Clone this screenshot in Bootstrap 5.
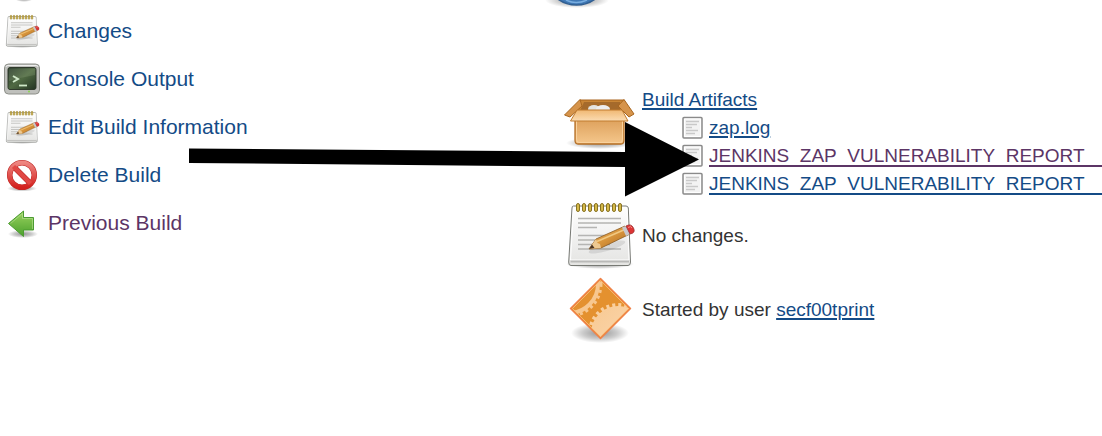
<!DOCTYPE html>
<html lang="en">
<head>
<meta charset="utf-8">
<meta name="viewport" content="width=device-width, initial-scale=1">
<title>Build</title>
<link href="https://cdn.jsdelivr.net/npm/bootstrap@5.3.0/dist/css/bootstrap.min.css" rel="stylesheet">
<script src="https://cdn.jsdelivr.net/npm/bootstrap@5.3.0/dist/js/bootstrap.bundle.min.js"></script>
<style>
body { font-family: "Liberation Sans", Arial, sans-serif; font-size: 19px; line-height: 28px; color: #333; background: #fff; }
a { color: #144b86; }
a.seen { color: #5c3566; }
.tasks { padding-left: 4px; }
.task-list { font-size: 21px; line-height: 32px; gap: 16px; }
.task-list a { gap: 8px; height: 32px; }
.summary { padding-left: 13px; }
.summary a { text-decoration-thickness: 2px; text-underline-offset: 2px; }
.status { height: 86px; }
.status svg { overflow: visible; }
.entry { gap: 6px; }
.event { height: 74px; }
.event span { padding-top: 2px; }
.files { padding-left: 40px; }
.files li { gap: 6px; height: 28px; }
.files .long-name { white-space: nowrap; line-height: 18px; margin-top: 2px; border-bottom: 2px solid; }
.pointer { left: 189px; top: 122px; pointer-events: none; }
</style>
</head>
<body>
<svg width="0" height="0" class="position-absolute" aria-hidden="true">
  <defs>
    <linearGradient id="paper" x2="0" y2="1"><stop stop-color="#fff"/><stop offset="1" stop-color="#e4e4e2"/></linearGradient>
    <linearGradient id="wood" x2="1" y2="1"><stop stop-color="#edb866"/><stop offset=".5" stop-color="#d8953c"/><stop offset="1" stop-color="#a9651e"/></linearGradient>
    <linearGradient id="carton" x2="0" y2="1"><stop stop-color="#dda05b"/><stop offset="1" stop-color="#f5c78c"/></linearGradient>
    <linearGradient id="flap" x2="0" y2="1"><stop stop-color="#f0b873"/><stop offset="1" stop-color="#fbdcb3"/></linearGradient>
    <linearGradient id="screen" x2="1" y2="1"><stop stop-color="#27382a"/><stop offset=".5" stop-color="#506a43"/><stop offset="1" stop-color="#223322"/></linearGradient>
    <linearGradient id="red" x2="0" y2="1"><stop stop-color="#ee8580"/><stop offset="1" stop-color="#d3211e"/></linearGradient>
    <linearGradient id="green" x2="0" y2="1"><stop stop-color="#9bd35f"/><stop offset="1" stop-color="#4aa02c"/></linearGradient>
    <linearGradient id="gear" x2="1" y2="1"><stop stop-color="#f8c992"/><stop offset="1" stop-color="#fbdcb9"/></linearGradient>
    <radialGradient id="shade"><stop stop-color="#000" stop-opacity=".42"/><stop offset=".6" stop-color="#000" stop-opacity=".2"/><stop offset="1" stop-color="#000" stop-opacity="0"/></radialGradient>
    <symbol id="notepad" viewBox="564 199 72 72">
      <ellipse cx="600" cy="264" rx="34" ry="5" fill="url(#shade)"/>
      <path d="M573.500 206H626Q628 206 628.300 208L630.500 262Q630.500 265.500 628 265.500H571Q568.500 265.500 568.700 262L572 208Q572 206 573.500 206Z" fill="url(#paper)" stroke="#777974"/>
      <path d="M573.500 209 570.500 260H629L627 209" fill="none" stroke="#fff"/>
      <path d="M570.500 261.500H629" stroke="#b9b9b7" stroke-width="2"/>
      <path d="M578 218.500H621M578 223H621M578 227.500H597M578 235.500H621M578 240H614M578 244.500H610M578 249H621" stroke="#b5b5b3" stroke-width="1.500"/>
      <g fill="#d5b94a" stroke="#887323"><rect x="576.500" y="203.500" width="3" height="8" rx="1.500"/><rect x="582.500" y="203.500" width="3" height="8" rx="1.500"/><rect x="588.500" y="203.500" width="3" height="8" rx="1.500"/><rect x="594.500" y="203.500" width="3" height="8" rx="1.500"/><rect x="600.500" y="203.500" width="3" height="8" rx="1.500"/><rect x="606.500" y="203.500" width="3" height="8" rx="1.500"/><rect x="612.500" y="203.500" width="3" height="8" rx="1.500"/><rect x="618.500" y="203.500" width="3" height="8" rx="1.500"/></g>
      <ellipse cx="607" cy="247" rx="19" ry="4" transform="rotate(-16 607 247)" fill="#000" opacity=".09"/>
      <path d="M589 249 596 239 625 226 630 234 601 248Z" fill="url(#wood)" stroke="#8a5a20" stroke-width=".8"/>
      <path d="M589 249 596 239 597.500 243 600 244 601 248Z" fill="#edc991"/><path d="M589 249 592 244.500 594.500 248Z" fill="#4b3625"/>
      <path d="M597 241.500 626 229" stroke="#f1c982" stroke-width="1.500"/>
      <path d="M622 227.500 626 226 630 234 626 236Z" fill="#c8c8cc"/><path d="M626 226Q631 223 633.500 228 636 233 630 234Z" fill="#dd3434" stroke="#9c3030" stroke-width=".8"/><path d="M628 227.500Q631 225.500 632 228" stroke="#fa8d88" fill="none"/>
    </symbol>
    <symbol id="document" viewBox="0 0 21 24">
      <rect x="1" y="1.500" width="19" height="20.500" rx="1" fill="#f3f3f3" stroke="#8a8a8a" stroke-width="1.500"/><path d="M2.500 3H18.500V20.500H2.500Z" fill="none" stroke="#fff"/>
      <path d="M4 5.500H17M4 8.500H15M4 11.500H10M4 14.500H16M4 17.500H13" stroke="#c9c9c9" stroke-width="1.300"/>
    </symbol>
  </defs>
</svg>

<div class="container-fluid p-0 position-relative overflow-hidden">
  <div class="row g-0">
    <nav class="col-6 tasks" aria-label="Build tasks">
      <svg class="d-block" width="36" height="15" viewBox="4 0 36 15" aria-hidden="true"><ellipse cx="24" cy="-1" rx="9" ry="3" fill="url(#shade)"/></svg>
      <div class="d-flex flex-column align-items-start task-list">
      <a href="#" class="d-inline-flex align-items-center text-decoration-none"><svg width="36" height="36" aria-hidden="true"><use href="#notepad"/></svg>Changes</a>
      <a href="#" class="d-inline-flex align-items-center text-decoration-none">
        <svg width="36" height="32" viewBox="4 63 36 32" aria-hidden="true">
          <rect x="4.500" y="64" width="35" height="30" rx="4" fill="#bfc0bc" stroke="#8d8f89"/><path d="M6 67Q6 65.500 8 65.500H36Q38 65.500 38 67" fill="none" stroke="#eee"/>
          <rect x="8" y="67.500" width="28" height="22" rx="2" fill="url(#screen)" stroke="#303a2c"/>
          <path d="M9 68.500H35V75Q23 77 9 81Z" fill="#dff0ca" opacity=".13"/>
          <path d="M13 76 18 79 13 82" fill="none" stroke="#cfe8c8" stroke-width="2"/><path d="M19 85.500H27" stroke="#cfe8c8" stroke-width="1.800"/><circle cx="29" cy="91.500" r="1" fill="#8bd54f"/>
        </svg>Console Output</a>
      <a href="#" class="d-inline-flex align-items-center text-decoration-none"><svg width="36" height="36" aria-hidden="true"><use href="#notepad"/></svg>Edit Build Information</a>
      <a href="#" class="d-inline-flex align-items-center text-decoration-none">
        <svg width="36" height="32" viewBox="4 159 36 32" aria-hidden="true">
          <ellipse cx="22" cy="188.500" rx="15" ry="3" fill="url(#shade)"/>
          <circle cx="22" cy="175" r="12.300" fill="#fff" stroke="#bd2725" stroke-width="5.500"/><path d="M13.500 166.500 30.500 183.500" stroke="#bd2725" stroke-width="5.500"/>
          <circle cx="22" cy="175" r="12.300" fill="none" stroke="url(#red)" stroke-width="4.500"/><path d="M13.500 166.500 30.500 183.500" stroke="#e14844" stroke-width="4.500"/>
        </svg>Delete Build</a>
      <a href="#" class="seen d-inline-flex align-items-center text-decoration-none">
        <svg width="36" height="32" viewBox="4 207 36 32" aria-hidden="true">
          <ellipse cx="23" cy="234" rx="15" ry="4" fill="url(#shade)"/>
          <path d="M8.500 223.500 23.500 211V217.500H33.500V230H23.500V236.500Z" fill="url(#green)" stroke="#4b9b31" stroke-linejoin="round"/><path d="M10.500 223.500 22.500 213.500V218.500H32.500V229" fill="none" stroke="#c5e8a3" opacity=".5"/>
        </svg>Previous Build</a>
      </div>
    </nav>

    <main class="col-6 summary">
      <div class="status">
        <svg class="d-block" width="72" height="10" viewBox="564 0 72 10" role="img" aria-label="Build successful">
          <ellipse cx="577" cy="0" rx="32" ry="8" fill="url(#shade)"/>
          <circle cx="576.500" cy="-27" r="32" fill="#3f78b5" stroke="#315f92" stroke-width="1.500"/><path d="M566 0Q576 5 587 0" fill="none" stroke="#79aee0" stroke-width="1.500"/>
        </svg>
      </div>
      <section class="d-flex align-items-start entry">
        <svg class="flex-shrink-0 mt-1" width="72" height="64" viewBox="564 90 72 64" aria-hidden="true">
          <ellipse cx="600" cy="143" rx="34" ry="6" fill="url(#shade)"/>
          <path d="M580 100H624V111H576Z" fill="#c98636" stroke="#a8631d"/><path d="M584 102H620V111H580Z" fill="#a56a2b"/>
          <ellipse cx="594" cy="109" rx="6" ry="4" fill="#e4e4e0"/><ellipse cx="603" cy="109" rx="7" ry="4" fill="#eee"/>
          <path d="M580 99.500 564.500 115 570 117 582 106Z" fill="#d6944b" stroke="#a8661f"/><path d="M624 99.500 634 114 629 117 618 106Z" fill="#d6944b" stroke="#a8661f"/>
          <path d="M575 119H624V140Q624 144 621 144H578Q575 144 575 140Z" fill="url(#carton)" stroke="#b56f25" stroke-width="1.300"/><path d="M576.500 121V139Q576.500 142.500 579 142.500H620Q622.500 142.500 622.500 139V121" fill="none" stroke="#f9d29e"/>
          <path d="M577 110H622L628 121H570.500Z" fill="url(#flap)" stroke="#c17c30" stroke-linejoin="round"/>
        </svg>
        <div class="flex-grow-1">
          <a href="#">Build Artifacts</a>
          <ul class="list-unstyled mb-0 files">
            <li class="d-flex align-items-center"><svg class="flex-shrink-0" width="21" height="24" aria-hidden="true"><use href="#document"/></svg><a href="#">zap.log</a></li>
            <li class="d-flex align-items-center"><svg class="flex-shrink-0" width="21" height="24" aria-hidden="true"><use href="#document"/></svg><a href="#" class="seen long-name flex-grow-1 text-decoration-none">JENKINS_ZAP_VULNERABILITY_REPORT_</a></li>
            <li class="d-flex align-items-center"><svg class="flex-shrink-0" width="21" height="24" aria-hidden="true"><use href="#document"/></svg><a href="#" class="long-name flex-grow-1 text-decoration-none">JENKINS_ZAP_VULNERABILITY_REPORT_</a></li>
          </ul>
        </div>
      </section>
      <section class="d-flex align-items-center entry event">
        <svg class="flex-shrink-0" width="72" height="72" aria-hidden="true"><use href="#notepad"/></svg>
        <span>No changes.</span>
      </section>
      <section class="d-flex align-items-center entry event">
        <svg class="flex-shrink-0" width="72" height="72" viewBox="564 274 72 72" aria-hidden="true">
          <defs><clipPath id="diamond"><path d="M600.500 281 629 309.500 600.500 338 572 309.500Z"/></clipPath></defs>
          <ellipse cx="600" cy="334" rx="29" ry="10" fill="url(#shade)"/>
          <path d="M600.500 279.500 630.500 309.500 600.500 339.500 570.500 309.500Z" fill="#e4912f" stroke="#f08148" stroke-width="1.500" stroke-linejoin="round"/>
          <g clip-path="url(#diamond)">
            <circle cx="569" cy="285" r="29" fill="none" stroke="#f7c78f" stroke-width="4"/>
            <circle cx="569" cy="285" r="32" fill="none" stroke="#f7c78f" stroke-width="3" stroke-dasharray="3 3"/>
            <circle cx="618" cy="334" r="27" fill="url(#gear)"/><circle cx="618" cy="334" r="28" fill="none" stroke="#f9cf9e" stroke-width="4" stroke-dasharray="3 3"/>
          </g>
          <path d="M600.500 281.500 628.500 309.500 600.500 337.500 572.500 309.500Z" fill="none" stroke="#fbbd7c" stroke-width=".8"/>
        </svg>
        <span>Started by user <a href="#">secf00tprint</a></span>
      </section>
    </main>
  </div>
  <svg class="position-absolute pointer" width="511" height="75" viewBox="189 122 511 75" aria-hidden="true"><path d="M189 148.500 625 152V122L699 159.500 625 196.500V167L189 163Z"/></svg>
</div>
</body>
</html>
